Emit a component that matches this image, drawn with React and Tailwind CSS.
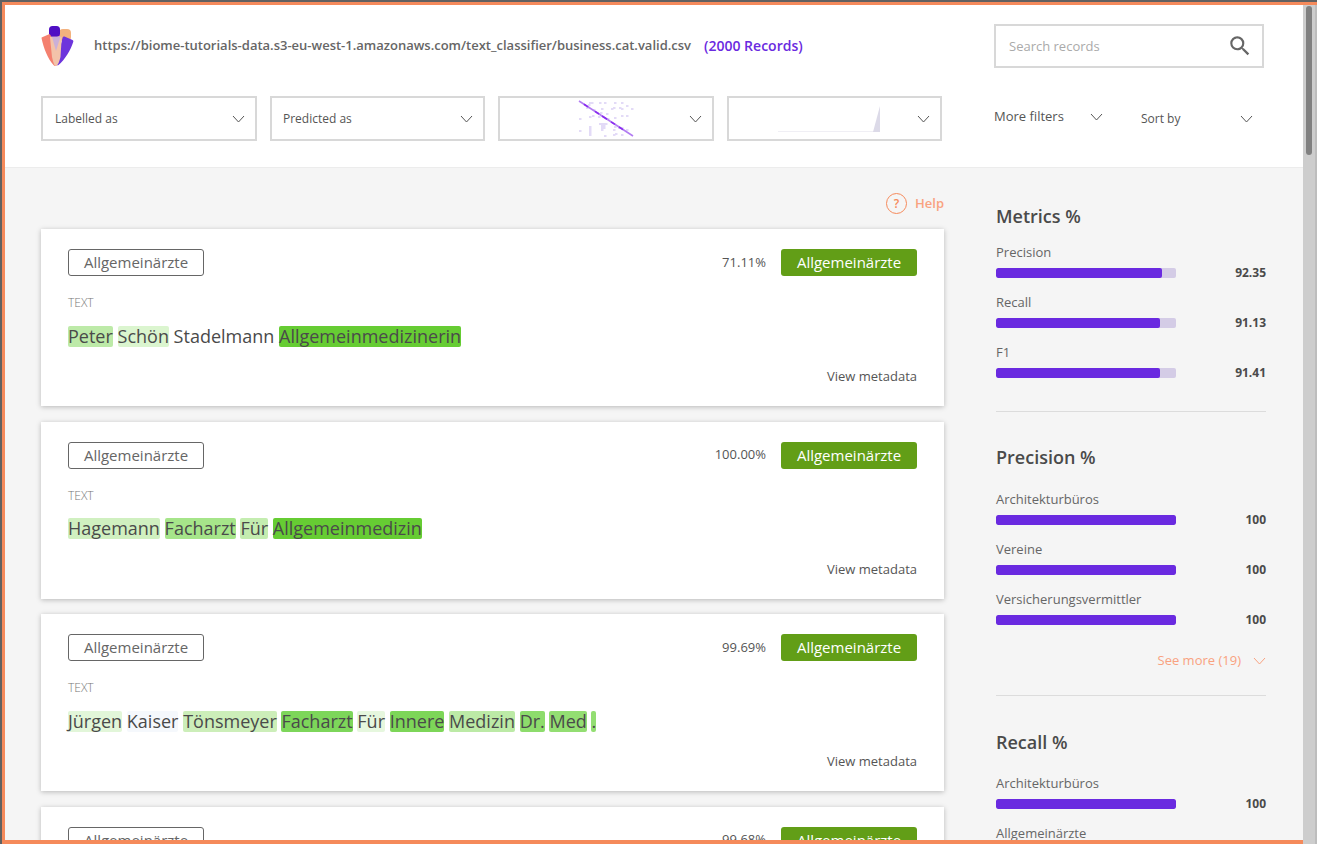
import { MdSearch } from 'react-icons/md';

const records = [
  {
    score: '71.11%',
    tokens: [
      ['Peter', 'bg-[#bdeaa8]'],
      ['Schön', 'bg-[#dbf5cf]'],
      ['Stadelmann', ''],
      ['Allgemeinmedizinerin', 'bg-[#66cc33]'],
    ],
  },
  {
    score: '100.00%',
    tokens: [
      ['Hagemann', 'bg-[#d0f0c0]'],
      ['Facharzt', 'bg-[#a6e58a]'],
      ['Für', 'bg-[#c4edb0]'],
      ['Allgemeinmedizin', 'bg-[#66cc33]'],
    ],
  },
  {
    score: '99.69%',
    tokens: [
      ['Jürgen', 'bg-[#e2f6d9]'],
      ['Kaiser', 'bg-[#f5f8fc]'],
      ['Tönsmeyer', 'bg-[#cceeb9]'],
      ['Facharzt', 'bg-[#7dd65a]'],
      ['Für', 'bg-[#e6f7de]'],
      ['Innere', 'bg-[#7dd658]'],
      ['Medizin', 'bg-[#bceaa6]'],
      ['Dr.', 'bg-[#8ddc6c]'],
      ['Med', 'bg-[#93de72]'],
      ['.', 'bg-[#93de72]'],
    ],
  },
  { score: '99.68%', tokens: [] },
];

const matrixDots = [
  [11, 2], [21, 2], [26, 2], [36, 2], [43, 2], [13, 2], [8, 7], [23, 8], [35, 7], [33, 8], [41, 7], [43, 8],
  [48, 5], [53, 8], [10, 4], [15, 9], [1, 18], [11, 16], [14, 15], [20, 16], [22, 12], [28, 13], [36, 17], [43, 15],
  [48, 15], [29, 18], [1, 30], [11, 26], [11, 28], [11, 30], [11, 32], [11, 34], [21, 23], [23, 23], [25, 23],
  [27, 23], [23, 25], [25, 25], [23, 27], [25, 27], [23, 29], [35, 34], [37, 33], [26, 35], [43, 34], [48, 29],
  [36, 26], [40, 27], [43, 27], [35, 29],
];

function Chevron({ className = 'text-[#555]' }) {
  return (
    <svg width="13" height="8" viewBox="0 0 13 8" fill="none" stroke="currentColor" strokeWidth="1" className={className}>
      <path d="M1 1l5.500 6L12 1" />
    </svg>
  );
}

function Logo() {
  return (
    <svg width="34" height="41" viewBox="0 0 34 41" className="shrink-0">
      <rect x="18" y="3" width="12" height="12" rx="4" fill="#f3b27e" />
      <rect x="8" y="0" width="11" height="11" rx="3.500" fill="#4f0fc4" />
      <path d="M.6 11.500L8 8.300c1 0 1.500.5 2 2L16 38.500c-.5 2-2.500 2-3.500.5C7 33 2.500 22 .6 12.500z" fill="#f4806f" />
      <path d="M21.500 12c.5-1.500 1.500-1.800 2.500-1.300l7.500 3.300c1 .5 1 1.200.7 2-2 7-8.700 18.500-14.700 23-1.200.8-2.500 0-2.500-1.500z" fill="#6d35dc" />
      <path d="M9.500 10.700h10.500c.5 0 .8.300.7 1L19.500 31c-1 4-2.500 8.700-4.500 9-2 0-3-5-4-9L9 11.500c0-.5 0-.8.500-.8z" fill="#f3c3a9" />
      <path d="M11 10.700h8.500L15 25z" fill="#cbb0d8" />
    </svg>
  );
}

function FilterBox({ children, className = '' }) {
  return (
    <div className={`flex h-[45px] items-center justify-between border-2 border-[#d8d8d8] pr-[10px] ${className}`}>
      {children}
      <Chevron />
    </div>
  );
}

function MatrixChart() {
  return (
    <svg width="56" height="37" viewBox="0 0 56 37" className="ml-[78px]">
      {matrixDots.map(([x, y]) => (
        <rect key={`${x}-${y}`} x={x} y={y} width="2.500" height="2" fill="#e3dbf7" />
      ))}
      <path d="M1 1l54 35" stroke="#b27cf2" strokeWidth="1.600" />
      <path d="M6 4.250l4 2.600M17 11.400l4 2.600M24 16l5 3.250M33 21.800l4 2.600M41 27l4 2.600" stroke="#8a2cf0" strokeWidth="1.600" />
    </svg>
  );
}

function SpikeChart() {
  return (
    <svg width="104" height="28" viewBox="0 0 104 28" className="ml-[49px]">
      <path d="M0 26.500h102" stroke="#f0eff5" strokeWidth="1" />
      <path d="M95 27L102 1v26z" fill="#dcdae8" />
    </svg>
  );
}

function RecordCard({ score, tokens }) {
  return (
    <div className="mb-[15.5px] h-[177px] shrink-0 bg-white px-[27px] pt-[20px] shadow-[0_1px_5px_rgba(0,0,0,0.25)]">
      <div className="flex items-center justify-between">
        <div className="flex h-[27px] w-[136px] items-center justify-center rounded-[3px] border border-[#666] text-[15px] text-[#666]">
          Allgemeinärzte
        </div>
        <div className="flex items-center gap-[15px]">
          <span className="text-[13px] text-[#555]">{score}</span>
          <div className="flex h-[27px] w-[136px] items-center justify-center rounded-[3px] bg-[#629e17] text-[15px] text-white">
            Allgemeinärzte
          </div>
        </div>
      </div>
      <div className="mt-[19px] text-[12px] leading-[16px] font-light text-[#777]">TEXT</div>
      <p className="mt-[14.5px] h-[21px] text-[18px] leading-[21px] whitespace-nowrap text-[#4a4a4a]">
        {tokens.map(([word, bg], i) => (
          <span key={i}>
            <span className={`inline-block rounded-[2px] ${bg}`}>{word}</span>{' '}
          </span>
        ))}
      </p>
      <div className="mt-[21.5px] text-right text-[13px] leading-[17px] text-[#555]">View metadata</div>
    </div>
  );
}

function MetricBar({ label, value, pct }) {
  return (
    <div className="h-[50px]">
      <div className="text-[13px] leading-[18px] text-[#666]">{label}</div>
      <div className="mt-[4px] flex h-[16px] items-center justify-between">
        <div className="h-[10px] w-[180px] overflow-hidden rounded-[2px] bg-[#d4cce6]">
          <div className="h-full rounded-[2px] bg-[#6a2ae0]" style={{ width: `${pct}%` }} />
        </div>
        <span className="text-[12px] font-bold text-[#4a4a4a]">{value}</span>
      </div>
    </div>
  );
}

export default function App() {
  return (
    <div className="h-[844px] w-[1317px] overflow-hidden border-t-2 border-l-2 border-[#616161] font-['Open_Sans',sans-serif]">
      <div className="flex h-[842px] border-t-[3px] border-[#f58a5b]">
        <main className="flex h-full min-w-0 flex-1 flex-col overflow-hidden border-b-[4px] border-l-[3px] border-[#f58a5b] bg-[#f5f5f5]">
          <header className="h-[163px] shrink-0 border-b border-[#ececec] bg-white pl-[36px]">
            <div className="flex h-[91px] items-center pb-[8px]">
              <Logo />
              <span className="mb-[2px] ml-[19px] text-[13px] font-semibold whitespace-nowrap text-[#666]">
                https://biome-tutorials-data.s3-eu-west-1.amazonaws.com/text_classifier/business.cat.valid.csv
              </span>
              <span className="mb-[2px] ml-[13px] text-[14px] font-semibold whitespace-nowrap text-[#6a2ae0]">(2000 Records)</span>
              <div className="mr-[39px] mb-[2px] ml-auto flex h-[44px] w-[270px] shrink-0 items-center justify-between border-2 border-[#d8d8d8] pr-[9px] pl-[13px]">
                <span className="pt-[2px] text-[13px] text-[#aaa]">Search records</span>
                <MdSearch size={26} className="text-[#666]" />
              </div>
            </div>
            <div className="flex items-center">
              <FilterBox className="w-[216px] pl-[12px]">
                <span className="text-[12px] text-[#555]">Labelled as</span>
              </FilterBox>
              <FilterBox className="ml-[13px] w-[215px] pl-[11px]">
                <span className="text-[12px] text-[#555]">Predicted as</span>
              </FilterBox>
              <FilterBox className="ml-[13px] w-[216px]">
                <MatrixChart />
              </FilterBox>
              <FilterBox className="ml-[13px] w-[215px]">
                <SpikeChart />
              </FilterBox>
              <div className="ml-[52px] flex w-[109px] items-center justify-between pb-[4px]">
                <span className="text-[13px] text-[#555]">More filters</span>
                <Chevron />
              </div>
              <div className="ml-[38px] flex w-[112px] items-center justify-between">
                <span className="text-[12px] text-[#555]">Sort by</span>
                <Chevron />
              </div>
            </div>
          </header>

          <div className="flex min-h-0 flex-1 overflow-hidden pl-[36px]">
            <section className="flex w-[903px] shrink-0 flex-col">
              <div className="flex h-[61px] shrink-0 items-start justify-end pt-[25px]">
                <div className="flex items-center gap-[8px]">
                  <span className="flex h-[21px] w-[21px] items-center justify-center rounded-full border border-[#f58a5b] text-[12px] font-semibold text-[#f58a5b]">
                    ?
                  </span>
                  <span className="text-[13px] font-semibold text-[#f9a280]">Help</span>
                </div>
              </div>
              {records.map((r) => (
                <RecordCard key={r.score} score={r.score} tokens={r.tokens} />
              ))}
            </section>

            <aside className="ml-[52px] w-[270px] shrink-0 pt-[35px]">
              <h2 className="text-[18px] leading-[26px] font-semibold text-[#4a4a4a]">Metrics %</h2>
              <div className="mt-[14px]">
                <MetricBar label="Precision" value="92.35" pct={92.35} />
                <MetricBar label="Recall" value="91.13" pct={91.13} />
                <MetricBar label="F1" value="91.41" pct={91.13} />
              </div>
              <div className="mt-[18px] h-[1px] bg-[#dcdcdc]" />
              <h2 className="mt-[32px] text-[18px] leading-[26px] font-semibold text-[#4a4a4a]">Precision %</h2>
              <div className="mt-[20px]">
                <MetricBar label="Architekturbüros" value="100" pct={100} />
                <MetricBar label="Vereine" value="100" pct={100} />
                <MetricBar label="Versicherungsvermittler" value="100" pct={100} />
              </div>
              <div className="mt-[8px] flex h-[26px] items-center justify-end gap-[12px] text-[#f9a280]">
                <span className="text-[13px]">See more (19)</span>
                <Chevron className="text-[#f9a280]" />
              </div>
              <div className="mt-[21px] h-[1px] bg-[#dcdcdc]" />
              <h2 className="mt-[33px] text-[18px] leading-[26px] font-semibold text-[#4a4a4a]">Recall %</h2>
              <div className="mt-[19px]">
                <MetricBar label="Architekturbüros" value="100" pct={100} />
                <MetricBar label="Allgemeinärzte" value="100" pct={100} />
              </div>
            </aside>
          </div>
        </main>

        <div className="h-full w-[14px] shrink-0 border-r-2 border-[#bdbdbd] bg-[#cdcdcd] pt-[1px] pl-[3px]">
          <div className="h-[149px] w-[6px] rounded-[3px] bg-[#808080]" />
        </div>
      </div>
    </div>
  );
}
